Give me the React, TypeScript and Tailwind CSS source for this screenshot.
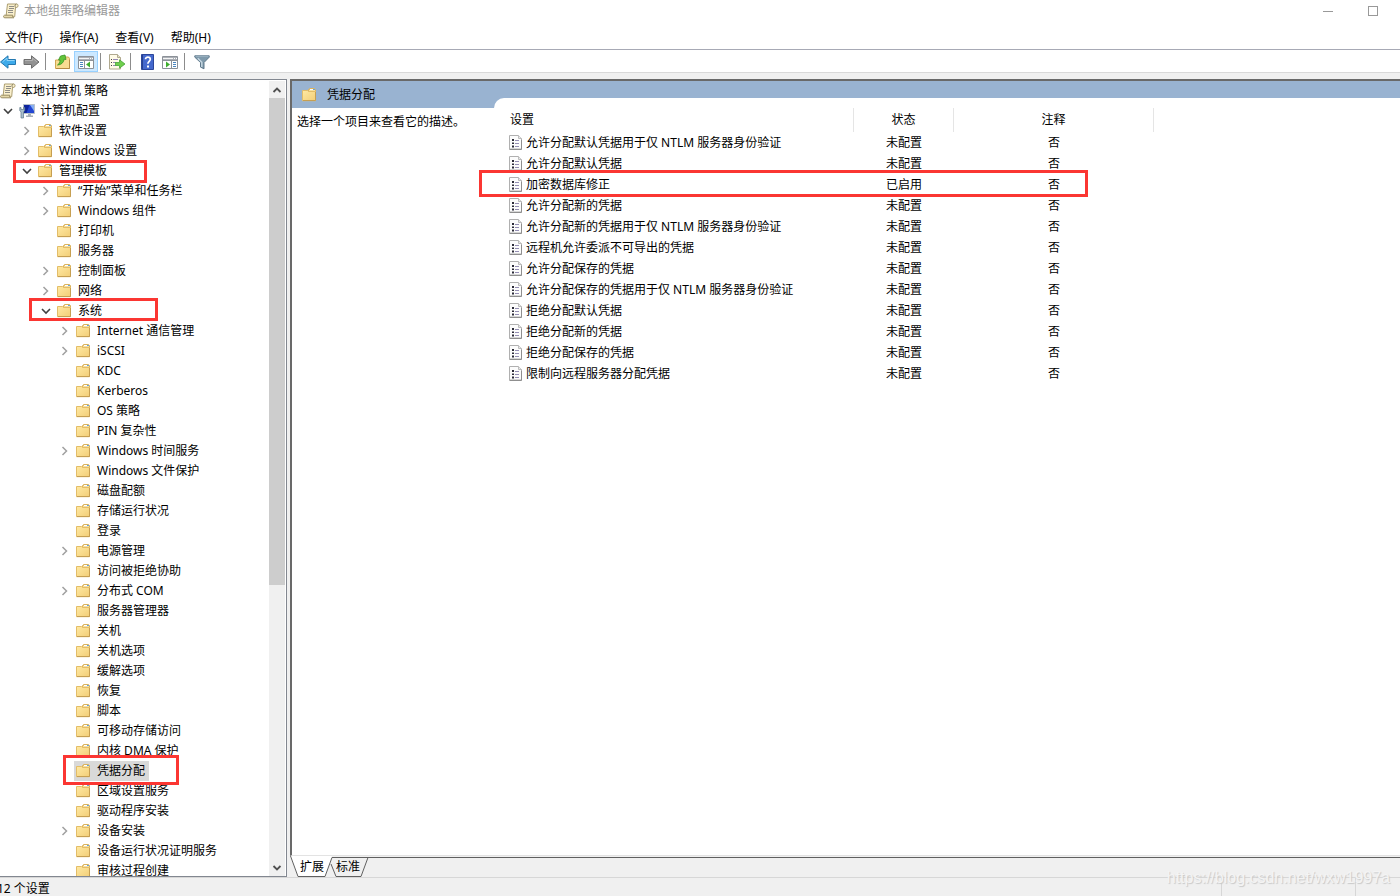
import { Fragment, useState } from "react";
import type { ReactNode } from "react";

/* ---------- icons ---------- */

function FolderIcon() {
  return (
    <svg width="16" height="16" viewBox="0 0 16 16" className="shrink-0" aria-hidden="true">
      <defs>
        <linearGradient id="folderFront" x1="0" y1="0" x2="1" y2="1">
          <stop offset="0" stopColor="#ffe9a3" />
          <stop offset="1" stopColor="#f2ce77" />
        </linearGradient>
      </defs>
      <path d="M6.500 5.500V2.500h1v-1h5v1h1v3z" fill="#f6dfa0" stroke="#dcb35c" />
      <path d="M8 2.500h3" stroke="#fff" />
      <path d="M11 2.500h2" stroke="#6aa5d6" />
      <path d="M.5 3.500h5l1 1h7v9.200H.5z" fill="url(#folderFront)" stroke="#e3bd68" />
      <path d="M1 13.500h12.500V5" fill="none" stroke="#c69f52" />
    </svg>
  );
}

function ScrollIcon() {
  return (
    <svg width="16" height="16" viewBox="0 0 16 16" className="shrink-0" aria-hidden="true">
      <path d="M4.500 1h9.300c1.800 0 1.600 3.400 0 3.400h-1.300l-.8 9.300H3z" fill="#faf0cd" stroke="#ad9f72" />
      <path d="M13.300 1c-1.600.5-1.600 2.700-.6 3.400" fill="none" stroke="#857a56" />
      <path d="M1.500 12.200h8.300c-.6 1-.1 2.100 1 2.600H1.800c-1.600 0-1.600-2.200-.3-2.600z" fill="#e6d9a9" stroke="#9a8d63" />
      <path d="M6 3.500h5M6 5.500h5M5 7.500h5M5 9.500h5" stroke="#8f8d86" />
    </svg>
  );
}

function ComputerIcon() {
  return (
    <svg width="16" height="16" viewBox="0 0 16 16" className="shrink-0" aria-hidden="true">
      <path d="M4.500 1.500h11v9h-11z" fill="#2346d2" stroke="#b9c1ca" />
      <path d="M5 2h5.500L7.500 10H5z" fill="#0d239c" />
      <path d="M11 2h4v6z" fill="#86aef3" />
      <path d="M9 11h3v1.500h2V14H7v-1.500h2z" fill="#a6afb8" />
      <path d="M.8 4.500v3.300l1.200 1V15h2.500V8.800l1.200-1V4.500H4.500v2H2v-2z" fill="#a9bfce" stroke="#5d7789" strokeWidth=".7" />
    </svg>
  );
}

function PolicyIcon() {
  return (
    <svg width="14" height="16" viewBox="0 0 14 16" className="shrink-0" aria-hidden="true">
      <path d="M.5.500h9l3 3v10.500H.5z" fill="#fcfcfc" stroke="#b0b0b0" />
      <path d="M9.500.500v3h3" fill="#e8e8e8" stroke="#bcbcbc" />
      <path d="M.5 14.500h12V5" fill="none" stroke="#8f8f8f" />
      <path d="M3 4h2v2H3zM3 7.500h2v1.500H3zM3 10.500h2v2H3z" fill="#2b2b38" />
      <path d="M6 5.500h4M6 8.500h4M6 11.500h4" stroke="#958fb4" />
    </svg>
  );
}

function Chevron({ open }: { open: boolean }) {
  return (
    <svg width="10" height="10" viewBox="0 0 10 10" fill="none" aria-hidden="true">
      {open ? (
        <path d="M1 3l4 4 4-4" stroke="#404040" strokeWidth="1.600" />
      ) : (
        <path d="M2.500 1l4 4-4 4" stroke="#a0a0a0" strokeWidth="1.500" />
      )}
    </svg>
  );
}

function ArrowIcon({ forward = false }: { forward?: boolean }) {
  return forward ? (
    <svg width="17" height="16" viewBox="0 0 17 16" aria-hidden="true">
      <path d="M1 5.500h7.500V1.800L16 8l-7.500 6.200v-3.700H1z" fill="#929292" stroke="#6e6e6e" />
      <path d="M2 6.500h7.500V4L14 8" fill="none" stroke="#b4b4b4" />
    </svg>
  ) : (
    <svg width="17" height="16" viewBox="0 0 17 16" aria-hidden="true">
      <path d="M15.500 5.500H8V1.800L.5 8 8 14.200v-3.700h7.500z" fill="#3eaaea" stroke="#2478b0" />
      <path d="M14.500 6.500H7V4L2.500 8" fill="none" stroke="#8fd3f7" />
    </svg>
  );
}

function UpFolderIcon() {
  return (
    <svg width="16" height="16" viewBox="0 0 16 16" aria-hidden="true">
      <path d="M8.500 4.500v-1.500h5l1 1.500v10H.5v-8.500H7z" fill="#f8dc92" stroke="#d0a654" />
      <path d="M1 14.500h13.500V6" fill="none" stroke="#b58b43" />
      <path d="M2.500 11c1.800-1 2.600-2.800 2.500-5H3.500L5.500 2l4.500-1 1 4.500-1.800-.3C8.800 8.500 6 11 2.500 11z" fill="#62c43a" stroke="#3a9425" strokeWidth=".8" />
    </svg>
  );
}

function ConsoleIcon({ side }: { side: "left" | "right" }) {
  return (
    <svg width="17" height="16" viewBox="0 0 17 16" aria-hidden="true">
      <path d="M.5 2.500h15v12H.5z" fill="#fff" stroke="#8c9198" />
      <path d="M1 3h14v3H1z" fill="#adb1b7" />
      <path d="M1 4.500h10" stroke="#f5f5f5" />
      <path d="M12 4.500h1M14 4.500h1" stroke="#fff" />
      <path d="M1 6.500h14" stroke="#8c9198" />
      {side === "left" ? (
        <>
          <path d="M6.500 7v7" stroke="#8b9197" />
          <path d="M2 8.500h3M2 10.500h3M2 12.500h3" stroke="#4a86c0" />
          <path d="M12 7.500v6l-4-3z" fill="#3fae2e" />
        </>
      ) : (
        <>
          <path d="M9.500 7v7" stroke="#8b9197" />
          <path d="M11 8.500h3M11 10.500h3M11 12.500h3" stroke="#4a86c0" />
          <path d="M4 7.500v6l4-3z" fill="#3fae2e" />
        </>
      )}
    </svg>
  );
}

function ExportIcon() {
  return (
    <svg width="17" height="16" viewBox="0 0 17 16" aria-hidden="true">
      <path d="M.5.500h8l3 3v11.500H.5z" fill="#fffbe8" stroke="#b0a98f" />
      <path d="M8.500.500v3h3" fill="#e8e2c9" stroke="#b0a98f" />
      <path d="M2 5.500h1M2 8.500h1M2 11.500h1" stroke="#444" />
      <path d="M4 5.500h5M4 8.500h3M4 11.500h3" stroke="#9489b5" />
      <path d="M6.500 8.500h4V5.800L16 10l-5.500 4.200v-2.700h-4z" fill="#6fcf4d" stroke="#48a338" strokeWidth=".8" />
    </svg>
  );
}

function HelpIcon() {
  return (
    <svg width="13" height="16" viewBox="0 0 13 16" aria-hidden="true">
      <path d="M.5.500h12v15H.5z" fill="#4468cd" stroke="#2c479b" />
      <path d="M1.500 1v14" stroke="#26408f" />
      <path d="M4.500 5.300C4.500 2.500 9.300 2.500 9.300 5.300c0 2-2.400 2.200-2.400 4.500" fill="none" stroke="#fff" strokeWidth="1.700" />
      <path d="M6 11.500h2v2H6z" fill="#fff" />
    </svg>
  );
}

function FilterIcon() {
  return (
    <svg width="16" height="16" viewBox="0 0 16 16" aria-hidden="true">
      <path d="M.8 1.800h14.400v1.400L10 8.500v6.300l-3.500-1.700V8.500L.8 3.200z" fill="#7f9aac" stroke="#5f788b" />
      <path d="M1.500 2.300h13" stroke="#9fb6c5" />
      <path d="M3.800 4.300l4 4V13" fill="none" stroke="#c7d8e2" strokeWidth="1.400" />
    </svg>
  );
}

/* ---------- annotation frame ---------- */

function Mark({ className }: { className: string }) {
  return <span className={`pointer-events-none absolute z-10 border-3 border-[#fb3632] ${className}`} />;
}

/* ---------- tree ---------- */

type Node = {
  label: string;
  state?: "open" | "closed";
  selected?: boolean;
  icon?: ReactNode;
  mark?: string;
  children?: Node[];
};

const systemNodes: Node[] = [
  { label: "Internet 通信管理", state: "closed" },
  { label: "iSCSI", state: "closed" },
  { label: "KDC" },
  { label: "Kerberos" },
  { label: "OS 策略" },
  { label: "PIN 复杂性" },
  { label: "Windows 时间服务", state: "closed" },
  { label: "Windows 文件保护" },
  { label: "磁盘配额" },
  { label: "存储运行状况" },
  { label: "登录" },
  { label: "电源管理", state: "closed" },
  { label: "访问被拒绝协助" },
  { label: "分布式 COM", state: "closed" },
  { label: "服务器管理器" },
  { label: "关机" },
  { label: "关机选项" },
  { label: "缓解选项" },
  { label: "恢复" },
  { label: "脚本" },
  { label: "可移动存储访问" },
  { label: "内核 DMA 保护" },
  { label: "凭据分配", selected: true, mark: "-top-[6px] left-[6px] h-[30px] w-[116px]" },
  { label: "区域设置服务" },
  { label: "驱动程序安装" },
  { label: "设备安装", state: "closed" },
  { label: "设备运行状况证明服务" },
  { label: "审核过程创建" },
];

const computerNode: Node = {
  label: "计算机配置",
  state: "open",
  icon: <ComputerIcon />,
  children: [
    { label: "软件设置", state: "closed" },
    { label: "Windows 设置", state: "closed" },
    {
      label: "管理模板",
      state: "open",
      mark: "-top-px -left-[6px] h-[23px] w-[134px]",
      children: [
        { label: "“开始”菜单和任务栏", state: "closed" },
        { label: "Windows 组件", state: "closed" },
        { label: "打印机" },
        { label: "服务器" },
        { label: "控制面板", state: "closed" },
        { label: "网络", state: "closed" },
        {
          label: "系统",
          state: "open",
          mark: "-top-[3px] -left-[9px] h-[23px] w-[129px]",
          children: systemNodes,
        },
      ],
    },
  ],
};

function TreeNode({ node }: { node: Node }) {
  const [open, setOpen] = useState(node.state === "open");
  return (
    <li role="treeitem" aria-expanded={node.state ? open : undefined} aria-selected={!!node.selected}>
      <div className="relative flex h-5 items-center">
        <span className="mr-0.5 flex w-[15px] shrink-0 justify-center">
          {node.state && (
            <button type="button" aria-label={`${open ? "折叠" : "展开"} ${node.label}`} onClick={() => setOpen(!open)}>
              <Chevron open={open} />
            </button>
          )}
        </span>
        <button
          type="button"
          className={`flex h-5 items-center gap-[5px] pl-0.5 whitespace-nowrap ${node.selected ? "bg-[#d9d9d9] pr-1" : ""}`}
        >
          {node.icon ?? <FolderIcon />}
          <span>{node.label}</span>
        </button>
        {node.mark && <Mark className={node.mark} />}
      </div>
      {open && node.children && (
        <ul role="group" className="pl-[19px]">
          {node.children.map((child) => (
            <TreeNode key={child.label} node={child} />
          ))}
        </ul>
      )}
    </li>
  );
}

function TreePane() {
  return (
    <nav className="flex w-[287px] shrink-0 border-t border-r border-b border-[#828790] bg-white pt-px pr-px" aria-label="控制台树">
      <div className="min-w-0 flex-1 overflow-x-hidden overflow-y-auto [scrollbar-width:none]">
        <ul role="tree">
          <li role="treeitem" aria-expanded="true" aria-selected="false">
            <button type="button" className="flex h-5 items-center gap-[5px]">
              <ScrollIcon />
              <span>本地计算机 策略</span>
            </button>
            <ul role="group">
              <TreeNode node={computerNode} />
            </ul>
          </li>
        </ul>
      </div>
      <div className="flex w-4 shrink-0 flex-col bg-[#f0f0f0]">
        <button type="button" aria-label="向上滚动" className="flex h-[17px] items-center justify-center">
          <svg width="10" height="8" viewBox="0 0 10 8" fill="none">
            <path d="M1.500 6L5 2.500 8.500 6" stroke="#505050" strokeWidth="1.800" />
          </svg>
        </button>
        <div className="flex-1">
          <div className="h-[64%] bg-[#cdcdcd]" />
        </div>
        <button type="button" aria-label="向下滚动" className="flex h-[17px] items-center justify-center">
          <svg width="10" height="8" viewBox="0 0 10 8" fill="none">
            <path d="M1.500 2L5 5.500 8.500 2" stroke="#505050" strokeWidth="1.800" />
          </svg>
        </button>
      </div>
    </nav>
  );
}

/* ---------- settings list ---------- */

const settings = [
  ["允许分配默认凭据用于仅 NTLM 服务器身份验证", "未配置"],
  ["允许分配默认凭据", "未配置"],
  ["加密数据库修正", "已启用"],
  ["允许分配新的凭据", "未配置"],
  ["允许分配新的凭据用于仅 NTLM 服务器身份验证", "未配置"],
  ["远程机允许委派不可导出的凭据", "未配置"],
  ["允许分配保存的凭据", "未配置"],
  ["允许分配保存的凭据用于仅 NTLM 服务器身份验证", "未配置"],
  ["拒绝分配默认凭据", "未配置"],
  ["拒绝分配新的凭据", "未配置"],
  ["拒绝分配保存的凭据", "未配置"],
  ["限制向远程服务器分配凭据", "未配置"],
];

function SettingsTable() {
  return (
    <table className="w-[660px] table-fixed border-separate border-spacing-0">
      <colgroup>
        <col className="w-[360px]" />
        <col className="w-[100px]" />
        <col className="w-[200px]" />
      </colgroup>
      <thead>
        <tr className="h-6">
          <th className="border-r border-[#e5e5e5] p-0 pl-4 text-left font-normal">设置</th>
          <th className="border-r border-[#e5e5e5] p-0 font-normal">状态</th>
          <th className="border-r border-[#e5e5e5] p-0 font-normal">注释</th>
        </tr>
      </thead>
      <tbody>
        {settings.map(([name, state]) => (
          <tr key={name} className="h-[21px]">
            <td className="relative p-0 pl-[15px]">
              <span className="flex items-center gap-[3px] whitespace-nowrap">
                <PolicyIcon />
                {name}
              </span>
              {state === "已启用" && <Mark className="-top-1 -left-[15px] h-[27px] w-[609px]" />}
            </td>
            <td className="p-0 text-center">{state}</td>
            <td className="p-0 text-center">否</td>
          </tr>
        ))}
      </tbody>
    </table>
  );
}

function ViewTabs() {
  return (
    <div className="relative flex h-[21px] bg-[#f0f0f0]" role="tablist">
      <svg width="80" height="21" viewBox="0 0 80 21" className="absolute top-0 left-0" aria-hidden="true">
        <path d="M0 0h42l-7 20.500H8z" fill="#fff" />
        <path d="M41 8l5 12.500h25L78 1.500H43z" fill="#f0f0f0" />
        <path d="M.5 0l7.500 20.500h27L42 1.500h38M41 8l5 12.500h25L78 1.500" fill="none" stroke="#606060" />
      </svg>
      <button type="button" role="tab" aria-selected="true" className="relative ml-[10px] w-6">
        扩展
      </button>
      <button type="button" role="tab" aria-selected="false" className="relative ml-3 w-6">
        标准
      </button>
      <div className="mt-px ml-[10px] flex-1 border-t border-[#606060]" />
    </div>
  );
}

function DetailPane() {
  return (
    <main className="flex min-w-0 flex-1 flex-col">
      <div className="flex min-h-0 flex-1 flex-col border-t-2 border-b border-l-2 border-t-[#696969] border-b-[#e3e3e3] border-l-[#696969] bg-white">
        <div className="flex h-[27px] shrink-0 items-center gap-[9px] bg-[#99b3d1] pl-2.5">
          <FolderIcon />
          <h1>凭据分配</h1>
        </div>
        <div className="flex flex-1">
          <p className="w-[202px] shrink-0 pt-1 pl-[5px] leading-5">选择一个项目来查看它的描述。</p>
          <section className="relative -mt-2.5 flex-1 rounded-tl-[10px] bg-white pt-2.5">
            <SettingsTable />
          </section>
        </div>
      </div>
      <ViewTabs />
    </main>
  );
}

/* ---------- window chrome ---------- */

const menus = ["文件(F)", "操作(A)", "查看(V)", "帮助(H)"];

type Tool = { label: string; icon: ReactNode; size: string };

const toolGroups: Tool[][] = [
  [
    { label: "后退", icon: <ArrowIcon />, size: "w-[17px]" },
    { label: "前进", icon: <ArrowIcon forward />, size: "ml-[5px] w-[18px]" },
  ],
  [
    { label: "向上一级", icon: <UpFolderIcon />, size: "ml-[5px] w-[23px]" },
    { label: "显示/隐藏控制台树", icon: <ConsoleIcon side="left" />, size: "w-6 border border-[#99d1ff] bg-[#cce8ff]" },
  ],
  [{ label: "导出列表", icon: <ExportIcon />, size: "ml-[5px] w-[22px]" }],
  [
    { label: "帮助", icon: <HelpIcon />, size: "ml-[5px] w-[23px]" },
    { label: "显示/隐藏操作窗格", icon: <ConsoleIcon side="right" />, size: "w-[23px]" },
  ],
  [{ label: "筛选器", icon: <FilterIcon />, size: "ml-[5px] w-[23px]" }],
];

function TitleBar() {
  return (
    <header className="flex h-[22px] items-center pl-[3px]">
      <ScrollIcon />
      <span className="ml-[5px] flex-1 text-[#999]">本地组策略编辑器</span>
      <button type="button" aria-label="最小化" className="mr-[35px] flex h-5 w-2.5 items-center">
        <span className="h-px w-full bg-[#999]" />
      </button>
      <button type="button" aria-label="最大化" className="mr-[22px] h-2.5 w-2.5 border border-[#999]" />
    </header>
  );
}

export default function App() {
  return (
    <div className="relative flex h-screen flex-col overflow-hidden bg-[#f0f0f0] font-['Noto_Sans','Noto_Sans_CJK_SC',sans-serif] text-xs leading-4 text-black">
      <div className="bg-white">
        <TitleBar />
        <div className="flex h-[27px] items-center gap-[17px] pt-1 pl-[5px]" role="menubar">
          {menus.map((label) => (
            <button key={label} type="button" role="menuitem">
              {label}
            </button>
          ))}
        </div>
        <div className="flex h-6 items-center border-t border-b border-t-[#a7a9b5] border-b-[#d9d9d9] pt-px" role="toolbar">
          {toolGroups.map((group, i) => (
            <Fragment key={group[0].label}>
              {i > 0 && <span className={`h-[17px] w-px bg-[#8c8c8c] ${i === 1 ? "ml-[5px]" : "ml-0.5"}`} />}
              {group.map((tool) => (
                <button
                  key={tool.label}
                  type="button"
                  aria-label={tool.label}
                  className={`flex h-[21px] items-center justify-center ${tool.size}`}
                >
                  {tool.icon}
                </button>
              ))}
            </Fragment>
          ))}
        </div>
      </div>
      <div className="flex min-h-0 flex-1 gap-[3px] pt-1.5">
        <TreePane />
        <DetailPane />
      </div>
      <footer className="flex h-[19px] shrink-0 border-t border-[#d7d7d7]">
        <span className="-ml-[3px] flex-1 pt-[3px]">12 个设置</span>
        <span className="w-[134px] border-l border-[#d7d7d7]" />
        <span className="w-[45px] border-l border-[#d7d7d7]" />
      </footer>
      <span className="pointer-events-none absolute right-2.5 bottom-2 font-['Liberation_Sans',sans-serif] text-base leading-5 text-[#f4f4f4] [text-shadow:1px_1px_1px_#c8c8c8]">
        https://blog.csdn.net/wxw1997a
      </span>
    </div>
  );
}
